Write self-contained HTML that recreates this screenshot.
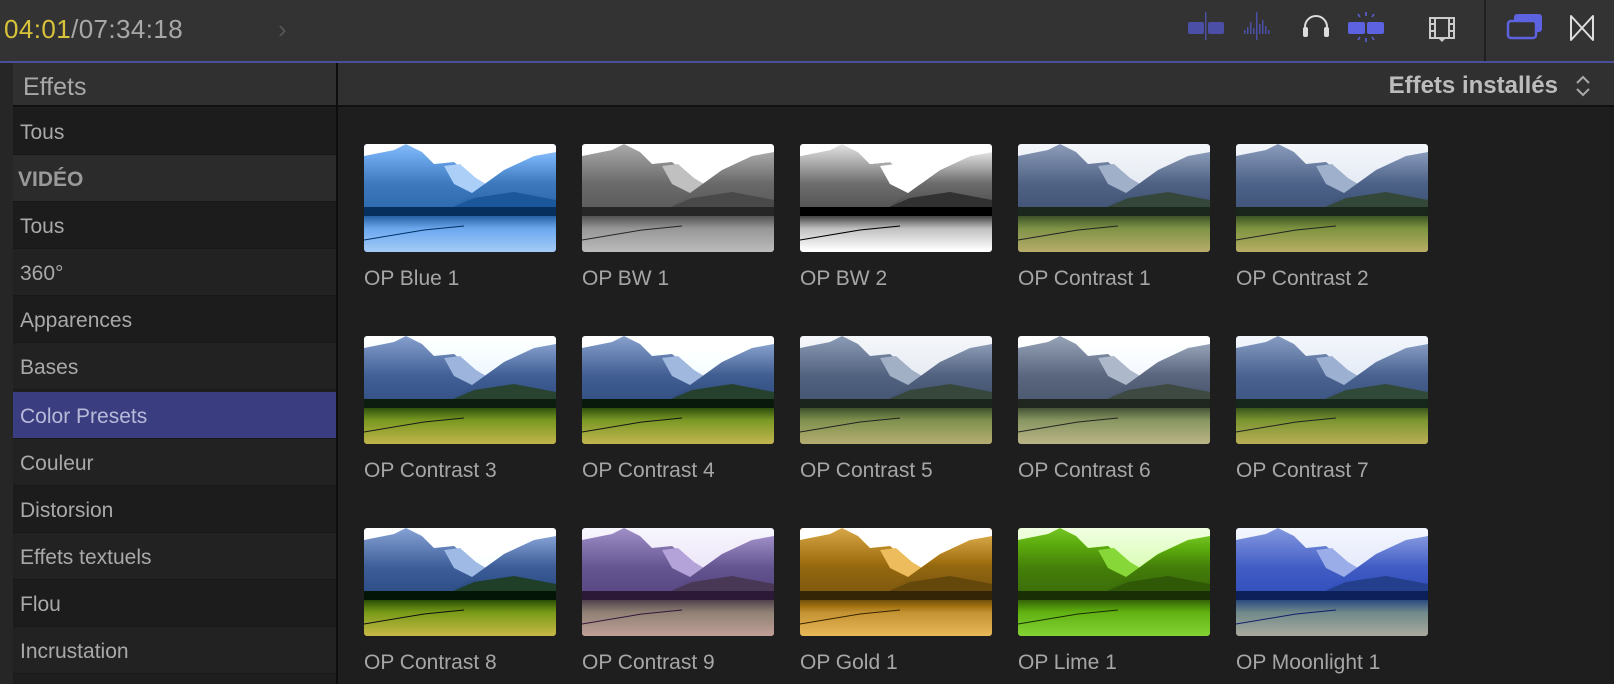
<!DOCTYPE html>
<html><head><meta charset="utf-8"><style>
*{margin:0;padding:0;box-sizing:border-box}
body{width:1614px;height:684px;background:#1e1e1e;font-family:"Liberation Sans",sans-serif;overflow:hidden;position:relative}
.top{position:absolute;left:0;top:0;width:1614px;height:61px;background:#333}
.bline{position:absolute;left:0;top:61px;width:1614px;height:2px;background:#4b4f9a}
.tc{position:absolute;left:4px;top:14px;font-size:26px;color:#a8a8a8;letter-spacing:.4px}
.tc span{color:#d8c23a}
.sep{position:absolute;left:1484px;top:0;width:2px;height:61px;background:#1f1f1f}
.side{position:absolute;left:13px;top:63px;width:323px;height:621px;background:#1e1e1e}
.lstrip{position:absolute;left:0;top:63px;width:13px;height:621px;background:#262626}
.sh{position:absolute;left:0;top:0;width:323px;height:44px;background:#303030;border-bottom:2px solid #111;color:#a8a8a8;font-size:25px;padding:10px 10px}
.row{position:absolute;left:0;width:323px;height:47px;color:#a9a9a9;font-size:21px;padding:13px 7px;border-bottom:1px solid #181818}
.vsep{position:absolute;left:336px;top:63px;width:2px;height:621px;background:#0e0e0e}
.mh{position:absolute;left:338px;top:63px;width:1276px;height:44px;background:#303030;border-bottom:2px solid #111}
.mh .t{position:absolute;right:56px;top:9px;font-size:24px;color:#bcbcbc;font-weight:bold}
.th{position:absolute;width:192px;height:108px;border-radius:3px;overflow:hidden}
.th svg{display:block}
.ov{position:absolute;inset:0}
.lb{position:absolute;font-size:21px;color:#a6a6a6;white-space:nowrap}
</style></head><body>
<svg width="0" height="0" style="position:absolute"><defs>
<linearGradient id="sky" x1="0" y1="0" x2="0" y2="1"><stop offset="0" stop-color="#f4f7fb"/><stop offset="1" stop-color="#ccd6e8"/></linearGradient>
<linearGradient id="mt" x1="0" y1="0" x2="0" y2="1"><stop offset="0" stop-color="#8a9cbc"/><stop offset=".5" stop-color="#4d6288"/><stop offset="1" stop-color="#3a4e72"/></linearGradient>
<linearGradient id="fld" x1="0" y1="0" x2="0" y2="1"><stop offset="0" stop-color="#3c5424"/><stop offset=".35" stop-color="#7e9440"/><stop offset="1" stop-color="#b8ae64"/></linearGradient>
<symbol id="sc" viewBox="0 0 192 108">
<rect width="192" height="108" fill="url(#sky)"/>
<polygon points="0,12 30,6 42,0 58,8 70,20 90,18 110,34 130,50 120,70 0,80" fill="url(#mt)"/>
<polygon points="80,22 96,20 112,34 122,40 110,50 90,40" fill="#9fb0cc"/>
<polygon points="90,62 140,26 170,12 192,8 192,70" fill="url(#mt)"/>
<polygon points="50,80 110,54 150,48 192,56 192,80" fill="#34483a"/>
<rect y="63" width="192" height="10" fill="#1a261c"/>
<rect y="72" width="192" height="36" fill="url(#fld)"/>
<polyline points="0,96 60,86 100,82" stroke="#222" stroke-width="1" fill="none"/>
</symbol></defs></svg>

<div class="top"></div>
<div class="tc"><span>04:01</span>/07:34:18</div>
<div style="position:absolute;left:278px;top:14px;color:#555;font-size:26px">›</div>
<svg style="position:absolute;left:1185px;top:10px" width="370" height="36" viewBox="1185 10 370 36">
<rect x="1188" y="22" width="16" height="12" rx="2" fill="#4b4fa6"/><rect x="1208" y="22" width="16" height="12" rx="2" fill="#4b4fa6"/><rect x="1205" y="12" width="1.5" height="28" fill="#4b4fa6"/>
<g fill="#4b4fa6"><rect x="1244" y="30" width="1.5" height="4"/><rect x="1247" y="27" width="1.5" height="7"/><rect x="1250" y="22" width="1.5" height="12"/><rect x="1253" y="28" width="1.5" height="6"/><rect x="1256" y="12" width="1.5" height="28"/><rect x="1259" y="24" width="1.5" height="10"/><rect x="1262" y="20" width="1.5" height="14"/><rect x="1265" y="26" width="1.5" height="8"/><rect x="1268" y="30" width="1.5" height="4"/></g>
<path d="M1305 36 V27 a11 11 0 0 1 22 0 V36" stroke="#ddd" stroke-width="2" fill="none"/><rect x="1303" y="27" width="5" height="10" rx="2" fill="#ddd"/><rect x="1324" y="27" width="5" height="10" rx="2" fill="#ddd"/>
<rect x="1348" y="22" width="17" height="12" rx="2" fill="#5d62e0"/><rect x="1367" y="22" width="17" height="12" rx="2" fill="#5d62e0"/>
<g stroke="#5d62e0" stroke-width="1.5"><line x1="1366" y1="12" x2="1366" y2="16"/><line x1="1366" y1="38" x2="1366" y2="42"/><line x1="1358" y1="14" x2="1360" y2="17"/><line x1="1374" y1="14" x2="1372" y2="17"/><line x1="1358" y1="40" x2="1360" y2="37"/><line x1="1374" y1="40" x2="1372" y2="37"/></g>
<rect x="1430" y="18" width="24" height="20" fill="none" stroke="#ccc" stroke-width="2"/><path d="M1435 18V38M1449 18V38M1430 24h5M1430 31h5M1449 24h5M1449 31h5" stroke="#ccc" stroke-width="2"/><path d="M1438 38l4 4 4-4z" fill="#ccc"/>
<rect x="1514" y="14" width="28" height="18" rx="3" fill="#5d62e0"/><rect x="1508" y="21" width="28" height="17" rx="3" fill="#333" stroke="#5d62e0" stroke-width="2.5"/>
</svg>
<svg style="position:absolute;left:1568px;top:14px" width="28" height="28"><path d="M3 2V26L25 2V26Z" stroke="#ddd" stroke-width="2" fill="none" stroke-linejoin="round"/></svg>
<div class="sep"></div>
<div class="bline"></div>

<div class="lstrip"></div>
<div class="side">
<div class="sh">Effets</div>
<div class="row" style="top:45px;background:#1c1c1c">Tous</div>
<div class="row" style="top:92px;background:#2b2b2b;padding-left:5px;font-weight:bold;color:#9a9a9a">VIDÉO</div>
<div class="row" style="top:139px;background:#1c1c1c">Tous</div>
<div class="row" style="top:186px;background:#222">360°</div>
<div class="row" style="top:233px;background:#1c1c1c">Apparences</div>
<div class="row" style="top:280px;background:#222">Bases</div>
<div class="row" style="top:329px;background:#3a3d7f;color:#b8bada">Color Presets</div>
<div class="row" style="top:376px;background:#222">Couleur</div>
<div class="row" style="top:423px;background:#1c1c1c">Distorsion</div>
<div class="row" style="top:470px;background:#222">Effets textuels</div>
<div class="row" style="top:517px;background:#1c1c1c">Flou</div>
<div class="row" style="top:564px;background:#222">Incrustation</div>
</div>
<div class="vsep"></div>
<div class="mh"><div class="t">Effets installés</div>
<svg style="position:absolute;right:22px;top:10px" width="18" height="26"><path d="M3 10l6-6 6 6M3 16l6 6 6-6" stroke="#aaa" stroke-width="2" fill="none"/></svg></div>

<!-- row 1 -->
<div class="th" style="left:364px;top:144px"><svg width="192" height="108" style="filter:grayscale(1) brightness(1.15)"><use href="#sc"/></svg><div class="ov" style="background:#2a70c0;mix-blend-mode:color;opacity:.85"></div></div>
<div class="th" style="left:582px;top:144px"><svg width="192" height="108" style="filter:grayscale(1) brightness(1.1)"><use href="#sc"/></svg></div>
<div class="th" style="left:800px;top:144px"><svg width="192" height="108" style="filter:grayscale(1) contrast(1.5) brightness(1.35)"><use href="#sc"/></svg></div>
<div class="th" style="left:1018px;top:144px"><svg width="192" height="108" style="filter:saturate(.9)"><use href="#sc"/></svg></div>
<div class="th" style="left:1236px;top:144px"><svg width="192" height="108"><use href="#sc"/></svg></div>
<!-- row 2 -->
<div class="th" style="left:364px;top:336px"><svg width="192" height="108" style="filter:saturate(1.3) contrast(1.1)"><use href="#sc"/></svg></div>
<div class="th" style="left:582px;top:336px"><svg width="192" height="108" style="filter:saturate(1.2) contrast(1.15)"><use href="#sc"/></svg></div>
<div class="th" style="left:800px;top:336px"><svg width="192" height="108" style="filter:saturate(.8)"><use href="#sc"/></svg></div>
<div class="th" style="left:1018px;top:336px"><svg width="192" height="108" style="filter:saturate(.6) brightness(1.05)"><use href="#sc"/></svg></div>
<div class="th" style="left:1236px;top:336px"><svg width="192" height="108" style="filter:saturate(1.2)"><use href="#sc"/></svg></div>
<!-- row 3 -->
<div class="th" style="left:364px;top:528px"><svg width="192" height="108" style="filter:saturate(1.3) contrast(1.2)"><use href="#sc"/></svg></div>
<div class="th" style="left:582px;top:528px"><svg width="192" height="108"><use href="#sc"/></svg><div class="ov" style="background:#d08ae8;mix-blend-mode:color;opacity:.4"></div></div>
<div class="th" style="left:800px;top:528px"><svg width="192" height="108" style="filter:grayscale(1) brightness(1.1)"><use href="#sc"/></svg><div class="ov" style="background:#d8a030;mix-blend-mode:color;opacity:.85"></div></div>
<div class="th" style="left:1018px;top:528px"><svg width="192" height="108" style="filter:grayscale(1)"><use href="#sc"/></svg><div class="ov" style="background:#78d020;mix-blend-mode:color;opacity:.9"></div></div>
<div class="th" style="left:1236px;top:528px"><svg width="192" height="108" style="filter:saturate(1.3)"><use href="#sc"/></svg><div class="ov" style="background:#2040ff;mix-blend-mode:color;opacity:.45"></div></div>

<div class="lb" style="left:364px;top:267px">OP Blue 1</div>
<div class="lb" style="left:582px;top:267px">OP BW 1</div>
<div class="lb" style="left:800px;top:267px">OP BW 2</div>
<div class="lb" style="left:1018px;top:267px">OP Contrast 1</div>
<div class="lb" style="left:1236px;top:267px">OP Contrast 2</div>
<div class="lb" style="left:364px;top:459px">OP Contrast 3</div>
<div class="lb" style="left:582px;top:459px">OP Contrast 4</div>
<div class="lb" style="left:800px;top:459px">OP Contrast 5</div>
<div class="lb" style="left:1018px;top:459px">OP Contrast 6</div>
<div class="lb" style="left:1236px;top:459px">OP Contrast 7</div>
<div class="lb" style="left:364px;top:651px">OP Contrast 8</div>
<div class="lb" style="left:582px;top:651px">OP Contrast 9</div>
<div class="lb" style="left:800px;top:651px">OP Gold 1</div>
<div class="lb" style="left:1018px;top:651px">OP Lime 1</div>
<div class="lb" style="left:1236px;top:651px">OP Moonlight 1</div>
</body></html>
